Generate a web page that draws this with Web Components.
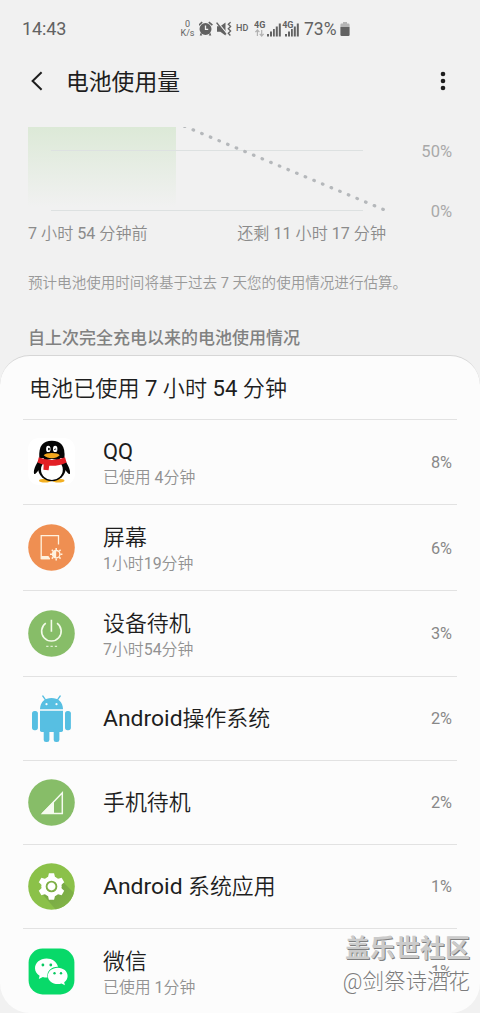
<!DOCTYPE html>
<html lang="zh-CN">
<head>
<meta charset="UTF-8">
<meta name="viewport" content="width=device-width, initial-scale=1.0">
<title>电池使用量</title>
<style>
  html, body {
    margin: 0;
    padding: 0;
  }

  body {
    width: 480px;
    height: 1013px;
    overflow: hidden;
    background: #f1f1f1;
    font-family: Roboto, "Noto Sans CJK SC DemiLight", "Noto Sans CJK SC", sans-serif;
    color: #1e1e1e;
  }
</style>
</head>
<body>
<battery-screen></battery-screen>

<script>
class StatusBar extends HTMLElement {
  connectedCallback() {
    this.attachShadow({ mode: 'open' });
    this.shadowRoot.innerHTML = `
      <style>
        :host {
          display: flex;
          align-items: center;
          height: 58px;
          padding: 0 130px 0 22px;
          color: #626262;
          box-sizing: border-box;
        }

        .time {
          font-size: 18px;
          line-height: 20px;
          letter-spacing: -0.1px;
          flex: 1;
        }

        .speed {
          display: flex;
          flex-direction: column;
          align-items: center;
          width: 15px;
          font-size: 9px;
          line-height: 9px;
          margin-right: 4px;
        }

        .hd {
          font-size: 9px;
          line-height: 10px;
          font-weight: 500;
          width: 13px;
          margin: -2px 5px 0 4px;
        }

        svg {
          display: block;
          flex: none;
        }

        .level {
          font-size: 17.5px;
          line-height: 20px;
          width: 33px;
          margin: 0 3px 0 4px;
        }
      </style>

      <span class="time">14:43</span>
      <span class="speed"><span>0</span><span>K/s</span></span>
      <svg width="33" height="16" viewBox="0 0 33 16" fill="#626262">
        <!-- alarm -->
        <circle cx="6.5" cy="8" r="6"/>
        <path d="M1.8 11.5.7 14.5h2.6zM11.2 11.5l1.1 3H9.700z"/>
        <path d="M-.2 4.200 3.200 1.200M13.400 4.200 9.800 1.200" stroke="#626262" stroke-width="1.7"/>
        <path d="M6.500 4.600V8.300H9.200" fill="none" stroke="#f1f1f1" stroke-width="1.3"/>
        <!-- muted speaker with vibration -->
        <path d="M18 5.2h3.3L26.5 1.5v13L21.3 10.8H18z"/>
        <path d="M18.2 1 27.6 12.2" stroke="#f1f1f1" stroke-width="1.3"/>
        <path d="M17.6 1.6 27 13.4" stroke="#626262" stroke-width="1.5"/>
        <path d="M31.6 1.3 29.3 3.2 31.6 5.5 29.3 7.8 31.6 10 29.3 12.2 31.4 14.5" fill="none" stroke="#626262" stroke-width="1.3"/>
      </svg>
      <span class="hd">HD</span>
      <svg width="46" height="18" viewBox="0 0 46 18" fill="#626262">
        <path d="M3.4 16V10.5M1.4 12.2l2-2.2 2 2.2M7.7 10V15.5M5.7 13.8l2 2.2 2-2.2" fill="none" stroke="#b2b2b2" stroke-width="1.2"/>
        <path d="M13 14h2v2.500h-2zM16 11.400h2v5.100h-2zM19 9h1.800v7.500H19zM21.800 6.500h2v10h-2zM24.800 3.500h2v13h-2z"/>
        <path d="M31 14h2v2.500h-2zM34 11.400h2v5.100h-2zM37 9h1.800v7.500H37zM39.800 6.500h2v10h-2zM42.800 3.500h2v13h-2z"/>
        <text x="0" y="8.200" font-size="9" font-weight="700">4G</text>
        <text x="28.200" y="8.200" font-size="9" font-weight="700" stroke="#f1f1f1" stroke-width="1" paint-order="stroke">4G</text>
      </svg>
      <span class="level">73%</span>
      <svg width="10" height="15" viewBox="0 0 10 15">
        <path d="M3 0h4v1.6h1.5Q9.6 1.6 9.6 3V5H.4V3Q.4 1.6 1.5 1.6H3z" fill="#b5b5b5"/>
        <path d="M.4 5h9.2v7.8q0 1.2-1.2 1.2H1.6Q.4 14 .4 12.8z" fill="#626262"/>
      </svg>
    `;
  }
}

class TitleBar extends HTMLElement {
  connectedCallback() {
    this.attachShadow({ mode: 'open' });
    this.shadowRoot.innerHTML = `
      <style>
        :host {
          display: flex;
          align-items: center;
          height: 46px;
          padding: 0 34px 0 31px;
        }

        svg {
          display: block;
        }

        h1 {
          flex: 1;
          margin: 0 0 0 23px;
          padding-top: 4px;
          font-family: Roboto, "Noto Sans CJK SC", sans-serif;
          font-size: 22.8px;
          line-height: 30px;
          font-weight: 400;
          color: #1e1e1e;
        }
      </style>

      <svg width="12" height="20" viewBox="0 0 12 20" fill="none" stroke="#1e1e1e" stroke-width="2">
        <path d="M10.6 1.2 1.6 10l9 8.8"/>
      </svg>
      <h1><slot></slot></h1>
      <svg width="6" height="20" viewBox="0 0 6 20" fill="#1e1e1e">
        <circle cx="3" cy="3" r="2.3"/>
        <circle cx="3" cy="10" r="2.3"/>
        <circle cx="3" cy="17" r="2.3"/>
      </svg>
    `;
  }
}

class BatteryChart extends HTMLElement {
  connectedCallback() {
    this.attachShadow({ mode: 'open' });
    this.shadowRoot.innerHTML = `
      <style>
        :host {
          display: block;
          padding: 23px 28px 0;
        }

        .plot {
          display: flex;
          justify-content: space-between;
          height: 92px;
        }

        svg {
          display: block;
        }

        .scale {
          display: flex;
          flex-direction: column;
          gap: 40px;
          padding-top: 15px;
          text-align: right;
          font-size: 16.5px;
          line-height: 20px;
          color: #a9a9a9;
        }

        .range {
          display: flex;
          justify-content: space-between;
          width: 358px;
          margin-top: 4px;
          font-size: 16.1px;
          line-height: 22px;
          color: #8b8b8b;
          white-space: nowrap;
        }
      </style>

      <div class="plot">
        <svg width="362" height="92" viewBox="0 0 362 92">
          <defs>
            <linearGradient id="used" x1="0" y1="0" x2="0" y2="1">
              <stop offset="0" stop-color="#dce9d7"/>
              <stop offset="1" stop-color="#f1f1f1"/>
            </linearGradient>
          </defs>
          <rect y="0" width="148" height="80" fill="url(#used)"/>
          <path d="M23 23.5H335M23 83.5H335" stroke="#dde1e1" stroke-width="1"/>
          <path d="M156.4-.8 356.2 82.8" fill="none" stroke="#b5b8bb" stroke-width="3.2"
            stroke-linecap="round" stroke-dasharray="0.6 8.75"/>
        </svg>
        <div class="scale"><span>50%</span><span>0%</span></div>
      </div>
      <div class="range"><span>7 小时 54 分钟前</span><span>还剩 11 小时 17 分钟</span></div>
    `;
  }
}

const ICONS = {
  qq: `
    <rect width="47" height="47" rx="11" fill="#fff"/>
    <ellipse cx="17" cy="42.7" rx="6" ry="1.9" fill="#f3b022"/>
    <ellipse cx="30.5" cy="42.7" rx="6" ry="1.9" fill="#f3b022"/>
    <path d="M11 22C7.5 27 5.4 32 6 35.400c.5 2 3-1 4.500-3.200h27c1.500 2.200 4 5.200 4.500 3.200C42.600 32 40 27 36.800 22z" fill="#050505"/>
    <path d="M11.300 20C10.500 7.500 15 2.700 23.900 2.700S37.300 7.500 36.500 20z" fill="#050505"/>
    <ellipse cx="23.900" cy="30.600" rx="13.700" ry="12.600" fill="#050505"/>
    <ellipse cx="23.900" cy="31.600" rx="10.900" ry="10.500" fill="#fff"/>
    <ellipse cx="20.300" cy="10.900" rx="2.200" ry="3.200" fill="#fff"/>
    <ellipse cx="27.200" cy="10.900" rx="2.200" ry="3.200" fill="#fff"/>
    <ellipse cx="20.900" cy="11.100" rx=".9" ry="1.400" fill="#050505"/>
    <path d="M26.200 11.700q1-1.600 2 0" stroke="#050505" stroke-width=".9" fill="none"/>
    <path d="M15.700 17.200q2-2.100 8.200-2.100T31.700 17.200q-3 3-7.900 3T15.700 17.200z" fill="#f3a71d"/>
    <path d="M10.800 19.200Q23.900 24.900 37 19.200l1.600 5.200Q31 28.200 21.200 27.700l-.6 4.500-5.200-.5.300-5.200Q12.500 25.900 9.500 24.400z" fill="#e31f25"/>`,
  screen: `
    <circle cx="23.500" cy="23.500" r="23.300" fill="#ef8f52"/>
    <path d="M30.500 20.500V11.700H13.200V34.500H22" fill="none" stroke="#fff2df" stroke-width="1.300"/>
    <path d="M13.200 32H20.500L22 35.200H13.200z" fill="#fff2df"/>
    <g fill="none" stroke="#fff2df" stroke-width="1.500">
      <circle cx="28.200" cy="30.200" r="3.700" stroke-width="1.300"/>
      <path d="M28.200 24v2M28.200 34.400v2M22 30.200h2M32.400 30.200h2M23.800 25.800l1.400 1.400M31.200 33.200l1.400 1.400M32.600 25.800l-1.400 1.400M25.200 33.200l-1.400 1.400"/>
    </g>
    <path d="M28.200 26.500a3.700 3.700 0 0 0 0 7.400z" fill="#fff2df"/>`,
  power: `
    <circle cx="23.500" cy="23.500" r="23.300" fill="#87bd68"/>
    <g fill="none" stroke="#f3fbe9" stroke-width="1.600">
      <path d="M17.800 13.200a9.800 9.800 0 1 0 11.200 0M23.400 9.800V21.800"/>
      <path d="M18.200 36.300h2.300M22.500 36.300h2.300M26.800 36.300h2.300" stroke-width="1"/>
    </g>`,
  android: `
    <g fill="#57bfe2">
      <path d="M12 14.200C12.300 6.500 17 3 23.500 3S34.700 6.500 35 14.200z"/>
      <path d="M14.800 1 17.500 4.800M32.200 1 29.500 4.800" stroke="#57bfe2" stroke-width="1.300" stroke-linecap="round"/>
      <path d="M12 15.800H35V35.300q0 1.700-1.700 1.700H13.700Q12 37 12 35.300z"/>
      <rect x="4" y="16" width="5.900" height="19.200" rx="2.600"/>
      <rect x="37" y="16" width="5.900" height="19.200" rx="2.600"/>
      <rect x="15.700" y="33" width="5.700" height="14" rx="2.300"/>
      <rect x="25.700" y="33" width="5.700" height="14" rx="2.300"/>
    </g>
    <circle cx="18.500" cy="9.200" r="1.100" fill="#fcfcfc"/>
    <circle cx="28.500" cy="9.200" r="1.100" fill="#fcfcfc"/>`,
  signal: `
    <circle cx="23.500" cy="23.500" r="23.300" fill="#87bd68"/>
    <path d="M34.300 13.800V34.500H14.500z" fill="none" stroke="#f5fbef" stroke-width="1.500"/>
    <path d="M26 22V34.500H13.500z" fill="#f5fbef"/>`,
  gear: `
    <defs>
      <clipPath id="disc"><circle cx="23.500" cy="23.500" r="23.300"/></clipPath>
      <linearGradient id="shade" x1="0" y1="0" x2="1" y2="1">
        <stop offset="0.400" stop-color="#79aa45"/>
        <stop offset="1" stop-color="#85b848"/>
      </linearGradient>
    </defs>
    <circle cx="23.500" cy="23.500" r="23.300" fill="#8bc149"/>
    <path d="M13.500 30 28 47H47V31L35 19z" fill="url(#shade)" clip-path="url(#disc)"/>
    <g transform="translate(23.500 23.500)" fill="#fff">
      <circle r="10.200"/>
      <path d="M-3.800-8 -2.600-13.200H2.600L3.800-8z"/>
      <path d="M-3.800-8 -2.600-13.200H2.600L3.800-8z" transform="rotate(60)"/>
      <path d="M-3.800-8 -2.600-13.200H2.600L3.800-8z" transform="rotate(120)"/>
      <path d="M-3.800-8 -2.600-13.200H2.600L3.800-8z" transform="rotate(180)"/>
      <path d="M-3.800-8 -2.600-13.200H2.600L3.800-8z" transform="rotate(240)"/>
      <path d="M-3.800-8 -2.600-13.200H2.600L3.800-8z" transform="rotate(300)"/>
      <circle r="4.900" fill="none" stroke="#7eaf46" stroke-width="1.900"/>
    </g>`,
  wechat: `
    <rect x=".6" y=".6" width="45.800" height="45.800" rx="14" fill="#08d969"/>
    <path d="M18.600 10.500C12 10.500 7 14.800 7 20.200c0 3.200 1.800 5.800 4.600 7.500l-.8 3.300 4-2q2 .6 4.700.5C18.500 23 23.500 18.600 30 18.800 28.800 14 24.200 10.500 18.600 10.500z" fill="#fff"/>
    <path d="M29.800 19.800c-5.600 0-9.900 3.600-9.900 8.100s4.300 8.100 9.900 8.100q1.900 0 3.700-.6l3.400 1.800-.7-3c2.200-1.500 3.400-3.800 3.400-6.300 0-4.500-4.200-8.100-9.800-8.100z" fill="#fff"/>
    <g fill="#08c961">
      <circle cx="14.900" cy="17" r="1.400"/>
      <circle cx="22.800" cy="17" r="1.400"/>
      <circle cx="26.500" cy="25.200" r="1.200"/>
      <circle cx="33" cy="25.200" r="1.200"/>
    </g>`
};

class AppIcon extends HTMLElement {
  connectedCallback() {
    this.attachShadow({ mode: 'open' });
    this.shadowRoot.innerHTML = `
      <style>
        :host {
          display: block;
          width: 47px;
          height: 47px;
        }

        svg {
          display: block;
        }
      </style>
      <svg width="47" height="47" viewBox="0 0 47 47">${ICONS[this.getAttribute('name')]}</svg>
    `;
  }
}

class UsageRow extends HTMLElement {
  connectedCallback() {
    const time = this.getAttribute('time');
    this.attachShadow({ mode: 'open' });
    this.shadowRoot.innerHTML = `
      <style>
        :host {
          display: flex;
          align-items: center;
          height: ${time ? 85.8 : 84}px;
          margin: 0 23px;
          padding: 0 5px;
          border-top: 1px solid #e2e2e2;
          box-sizing: border-box;
        }

        .info {
          flex: 1;
          margin-left: 28px;
          padding-top: ${time ? 2.4 : 2}px;
        }

        .name {
          font-size: 21.9px;
          line-height: 28px;
          color: #1e1e1e;
        }

        ::slotted(b) {
          font-size: 22.9px;
          font-weight: inherit;
        }

        .time {
          font-size: 15.9px;
          line-height: 20px;
          margin-top: 2px;
          color: #929292;
        }

        .percent {
          font-size: 16.3px;
          line-height: 20px;
          margin-top: 1.5px;
          color: #888;
        }
      </style>

      <slot name="icon"></slot>
      <div class="info">
        <div class="name"><slot></slot></div>
        ${time ? `<div class="time">${time}</div>` : ''}
      </div>
      <span class="percent">${this.getAttribute('percent')}</span>
    `;
  }
}

class UsageCard extends HTMLElement {
  connectedCallback() {
    this.attachShadow({ mode: 'open' });
    this.shadowRoot.innerHTML = `
      <style>
        :host {
          display: block;
          height: 658px;
          box-sizing: border-box;
          border-top: 1px solid #d6d6d6;
          border-radius: 30px;
          background: #fcfcfc;
          overflow: hidden;
        }

        h2 {
          margin: 0;
          padding: 18px 29px 15.6px;
          font-size: 22.1px;
          line-height: 29px;
          font-weight: 400;
          color: #1e1e1e;
        }
      </style>

      <h2>${this.getAttribute('heading')}</h2>
      <slot></slot>
    `;
  }
}

class ForumMark extends HTMLElement {
  connectedCallback() {
    this.attachShadow({ mode: 'open' });
    this.shadowRoot.innerHTML = `
      <style>
        :host {
          position: absolute;
          right: 10px;
          bottom: 15px;
          display: flex;
          flex-direction: column;
          align-items: flex-end;
          white-space: nowrap;
        }

        .site {
          font-family: Roboto, "Noto Sans CJK SC", sans-serif;
          font-size: 25px;
          line-height: 34px;
          font-weight: 700;
          color: #cbcbcb;
          text-shadow: 1px 1px 0 #808080;
        }

        .user {
          font-family: Roboto, "Noto Sans CJK SC", sans-serif;
          font-size: 21.5px;
          line-height: 32px;
          font-weight: 300;
          color: #7c7c7c;
          text-shadow: -1px -1px 0 #fff;
        }
      </style>

      <span class="site">盖乐世社区</span>
      <span class="user">@剑祭诗酒花</span>
    `;
  }
}

class BatteryScreen extends HTMLElement {
  connectedCallback() {
    this.attachShadow({ mode: 'open' });
    this.shadowRoot.innerHTML = `
      <style>
        :host {
          display: flex;
          flex-direction: column;
          position: relative;
          width: 480px;
          height: 1013px;
          overflow: hidden;
        }

        .note {
          margin: 28px 28px 0;
          font-size: 14.55px;
          line-height: 22px;
          color: #999;
          white-space: nowrap;
        }

        .section {
          margin: 31px 28px 0;
          height: 29px;
          font-family: Roboto, "Noto Sans CJK SC", sans-serif;
          font-size: 17px;
          line-height: 24px;
          font-weight: 500;
          color: #818181;
        }
      </style>

      <status-bar></status-bar>
      <title-bar>电池使用量</title-bar>
      <battery-chart></battery-chart>
      <div class="note">预计电池使用时间将基于过去 7 天您的使用情况进行估算。</div>
      <div class="section">自上次完全充电以来的电池使用情况</div>
      <usage-card heading="电池已使用 7 小时 54 分钟">
        <usage-row time="已使用 4分钟" percent="8%"><app-icon slot="icon" name="qq"></app-icon>QQ</usage-row>
        <usage-row time="1小时19分钟" percent="6%"><app-icon slot="icon" name="screen"></app-icon>屏幕</usage-row>
        <usage-row time="7小时54分钟" percent="3%"><app-icon slot="icon" name="power"></app-icon>设备待机</usage-row>
        <usage-row percent="2%"><app-icon slot="icon" name="android"></app-icon><b>Android</b>操作系统</usage-row>
        <usage-row percent="2%"><app-icon slot="icon" name="signal"></app-icon>手机待机</usage-row>
        <usage-row percent="1%"><app-icon slot="icon" name="gear"></app-icon><b>Android</b> 系统应用</usage-row>
        <usage-row time="已使用 1分钟" percent="1%"><app-icon slot="icon" name="wechat"></app-icon>微信</usage-row>
      </usage-card>
      <forum-mark></forum-mark>
    `;
  }
}

customElements.define('status-bar', StatusBar);
customElements.define('title-bar', TitleBar);
customElements.define('battery-chart', BatteryChart);
customElements.define('app-icon', AppIcon);
customElements.define('usage-row', UsageRow);
customElements.define('usage-card', UsageCard);
customElements.define('forum-mark', ForumMark);
customElements.define('battery-screen', BatteryScreen);
</script>
</body>
</html>
